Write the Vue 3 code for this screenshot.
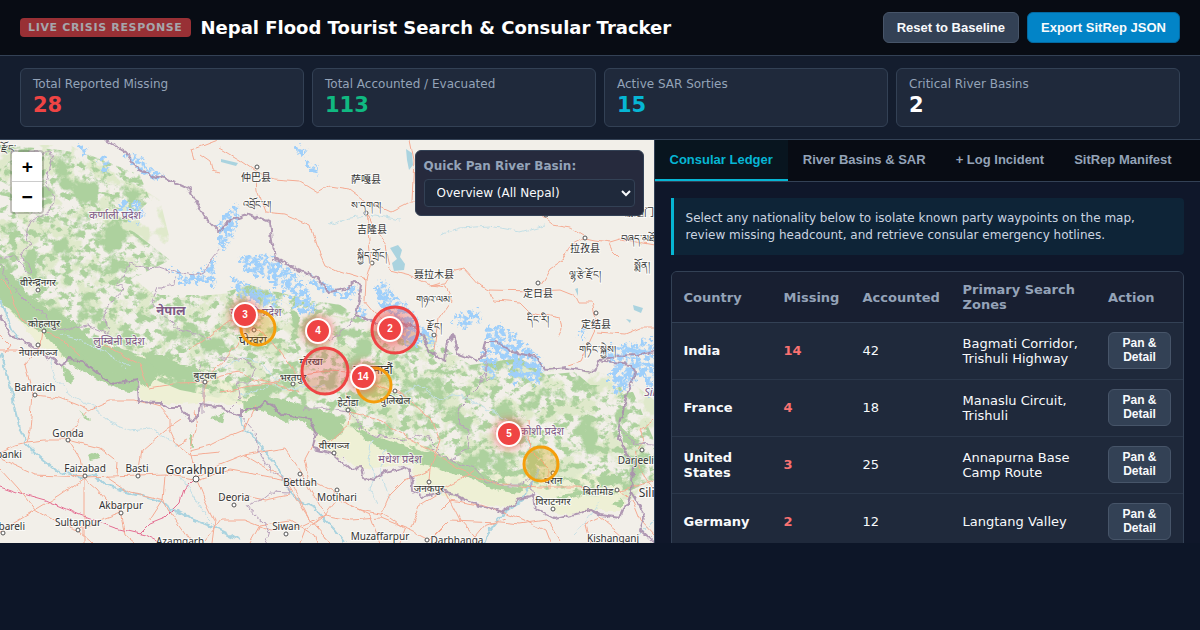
<script setup>
import { ref } from 'vue'

const basin = ref('Overview (All Nepal)')
const basins = ['Overview (All Nepal)', 'Gandaki Basin', 'Bagmati Basin', 'Koshi Basin']
const active = ref('Consular Ledger')
const tabs = ['Consular Ledger', 'River Basins & SAR', '+ Log Incident', 'SitRep Manifest']

const stats = [
  { label: 'Total Reported Missing', value: 28, tone: 'red' },
  { label: 'Total Accounted / Evacuated', value: 113, tone: 'green' },
  { label: 'Active SAR Sorties', value: 15, tone: 'cyan' },
  { label: 'Critical River Basins', value: 2, tone: 'white' }
]

const rows = [
  { country: 'India', missing: 14, accounted: 42, zones: 'Bagmati Corridor, Trishuli Highway' },
  { country: 'France', missing: 4, accounted: 18, zones: 'Manaslu Circuit, Trishuli' },
  { country: 'United States', missing: 3, accounted: 25, zones: 'Annapurna Base Camp Route' },
  { country: 'Germany', missing: 2, accounted: 12, zones: 'Langtang Valley' }
]

const zones = [
  { x: 395, y: 330, r: 23, c: '#ef4444' },
  { x: 325, y: 371, r: 23, c: '#ef4444' },
  { x: 258, y: 328, r: 17, c: '#f59e0b' },
  { x: 374, y: 385, r: 17, c: '#f59e0b' },
  { x: 541, y: 464, r: 17, c: '#f59e0b' }
]
const markers = [
  { x: 245, y: 315, n: 3 },
  { x: 318, y: 331, n: 4 },
  { x: 390, y: 329, n: 2 },
  { x: 363, y: 377, n: 14 },
  { x: 509, y: 434, n: 5 }
]

const frontier = [
  '105,140 125,152 131,160 140,170 153,176 165,178 177,184 190,190 197,204 203,215 212,225 220,233 226,224 232,220 250,214 270,222 272,240 275,258 297,270 316,277 330,292 347,288 355,281 362,285 359,300 356,315 375,323 400,322 420,330 430,352 445,361 448,340 453,334 458,354 478,361 483,356 486,342 497,342 513,352 535,357 545,370 567,368 594,372 598,361 630,365 635,374 625,400 618,438 634,465 631,492 620,518 600,515 590,510 575,514 555,519 535,509 533,496 518,500 503,512 470,502 455,494 440,491 423,497 412,490 411,470 402,467 383,473 375,479 364,477 362,467 350,468 333,453 313,448 316,432 310,419 283,415 276,408 265,401 257,409 241,409 241,416 220,407 200,405 197,418 190,420 180,408 170,408 160,403 139,402 137,380 112,384 82,360 68,359 62,366 25,342 10,335 0,315',
  '598,361 615,356 635,355 654,351',
  '631,492 637,502 645,515 640,530 654,543'
]
const provinces = [
  '12,152 50,152 52,160 45,185 54,195 50,212 30,222 25,235 30,242 20,255 33,272',
  '0,258 15,256 28,272 33,272',
  '0,262 8,282 20,295 30,305 45,315 50,326 65,330 88,326 108,334',
  '108,334 105,310 113,300 124,288 116,285 125,275 130,263 145,268 160,267 175,272 195,275 205,272 212,258 220,248',
  '175,275 174,285 158,288 152,302 163,315 180,330 200,335 212,340',
  '220,358 240,358 256,368 250,382 238,382 240,398 230,408',
  '330,340 350,325 356,315',
  '303,410 306,408 320,408 350,412 362,428 375,436 390,438 405,440 415,434 430,440 440,450',
  '485,371 480,385 460,405 458,425 470,432 468,448 450,460',
  '430,448 450,460 475,468 485,480 500,485 520,485 530,478 535,500',
  '485,362 486,380 490,378',
  '241,416 255,432 258,450 270,470 285,480 290,493 270,492 260,500 247,505 255,515 270,528 265,543',
  '620,430 635,443 654,444',
  '203,412 203,380 200,360'
]
const roads = [
  '220,148 240,160 262,175 275,180 300,182 318,193 330,186 350,189 366,201 390,212 410,202 440,202',
  '256,180 257,190 265,212 285,214 310,225 316,245 325,265 340,272 366,280',
  '366,212 372,225 386,245 390,270 410,275 430,285 440,282',
  '366,280 371,262 368,230 366,212',
  '366,280 365,300 375,312 395,330',
  '410,140 414,160 412,200',
  '430,285 446,287 452,300 438,320 434,350',
  '430,285 446,284 455,270 464,268 480,286 490,290 535,291 560,290 575,296 578,302 592,302 597,325 590,340 580,362 568,366',
  '490,290 494,300 520,302 530,312 560,318 562,330 558,338',
  '540,285 550,268 562,260 572,245 585,238 595,240 610,242 620,239 654,245',
  '540,215 552,225 570,228 583,236',
  '597,332 625,334 640,328 654,328',
  '608,242 612,250 620,258',
  '200,155 210,162 212,170 220,172',
  '195,160 192,150 210,143 218,140',
  '0,280 10,290 15,305 22,318 35,330 50,333 65,342 80,356',
  '42,332 40,345 36,352 25,365 33,395 30,430 27,442',
  '0,350 25,350 42,352',
  '35,395 60,398 78,405 88,410 110,400 135,400 160,407 170,418 170,430 177,445 188,440',
  '27,442 45,440 68,440 75,425 88,410',
  '0,452 15,445 27,442',
  '0,459 35,475 85,477 138,475 165,474 200,480 230,470 260,475 285,480 310,520 330,543',
  '68,440 80,460 84,478 84,543',
  '68,440 100,448 118,462 117,475',
  '84,478 60,495 35,510 10,525 0,533',
  '35,510 18,488 0,468',
  '35,510 55,522 78,530 92,543',
  '84,478 98,490 110,505 120,510 125,535 135,543',
  '78,530 100,520 121,512',
  '138,475 142,450 165,430 180,420',
  '105,475 130,492 165,500 172,515 190,540',
  '196,478 190,450 196,430 194,410',
  '196,478 205,500 215,520 212,543',
  '196,478 220,465 245,455 270,470 290,480 310,520',
  '165,474 163,500 150,520',
  '190,450 210,445 220,440 244,430 255,405',
  '177,445 190,455 220,452',
  '148,388 180,383 205,382 220,375 240,372 254,380 275,384 300,392',
  '205,383 205,408',
  '100,343 140,365 148,387',
  '315,441 305,460 310,480 330,490 350,505 370,515 380,543',
  '245,455 285,448 300,470 325,515 350,520 380,518 410,530 430,540',
  '337,500 325,515 305,530 300,543',
  '380,518 390,495 405,480 430,470',
  '410,530 420,505 445,490 460,520 480,543',
  '430,540 450,520 500,522 520,524 548,520 560,540',
  '220,500 240,495 265,500 290,495',
  '205,540 220,520 245,520 270,530 300,527 325,515',
  '345,390 350,410 348,425 330,440 318,450',
  '350,412 380,420 410,440 430,450 460,470 500,485 540,487 575,487 600,489 620,490 640,485 654,480',
  '220,392 250,386 272,384 295,375 325,371 350,372 365,380 385,388 400,395',
  '254,328 240,340 225,360 205,378',
  '254,328 275,345 290,365 295,375',
  '254,328 230,320 210,335 190,350',
  '395,390 415,405 432,420 440,440 430,470 428,490',
  '550,490 550,470 530,450 528,420',
  '620,490 632,500 640,520 654,535',
  '635,450 640,470 647,480 654,490',
  '654,420 640,430 645,440 638,448',
  '440,510 450,500 480,505 520,518 545,530 550,543',
  '470,543 485,525 505,518',
  '590,543 585,525 600,518 615,530 630,543',
  '0,335 10,345 5,352',
  '250,543 260,525 290,520 315,535 318,543',
  '400,543 405,530 385,515 360,510 337,500',
  '440,490 460,480 475,470'
]
const expressways = [
  '0,486 20,493 45,500 80,515 115,528 145,535 160,543',
  '140,534 150,524 165,518 180,503 184,490 190,483 196,477'
]
const rivers = [
  '0,353 5,370 10,385 15,410 20,430 27,445 40,457 55,470 80,477 95,475 105,485 130,493 155,500 175,510 190,518 215,528 240,540',
  '240,415 243,428 252,434 265,452 277,465 285,485 298,500 315,508 325,520 335,530 345,543',
  '0,300 5,310 12,330 20,340',
  '540,470 530,485 522,500 505,512 490,530 485,543'
]
const streams = [
  '50,358 55,380 75,398 95,408 110,422 130,430 150,428 170,440 182,448',
  '372,440 368,460 375,475 370,490 378,505',
  '390,500 380,470 386,450',
  '180,475 190,490 205,515 220,530',
  '60,335 80,340 105,352 130,368',
  '400,395 420,385 440,400 460,395 490,410 520,430 540,455',
  '440,235 460,228 490,226 520,232 545,225',
  '600,500 590,515 575,535',
  '655,520 640,535',
  '220,370 240,358 262,362 280,390 325,385',
  '330,225 350,218 375,215 400,220',
  '240,395 265,388 285,375'
]
const towns = [
  [38, 290], [44, 331], [38, 345], [35, 395], [68, 440], [85, 476], [138, 476], [121, 513], [78, 530], [3, 533], [205, 382], [254, 330],
  [257, 167], [366, 213], [372, 263], [293, 384], [348, 410], [334, 453], [300, 474], [337, 490], [234, 505], [286, 534], [395, 391],
  [538, 283], [585, 238], [596, 313], [434, 335], [429, 482], [553, 473], [553, 509], [617, 490], [642, 450], [427, 540], [546, 215]
]
const labels = [
  { t: 'कर्णाली प्रदेश', x: 115, y: 219, k: 'state' },
  { t: 'लुम्बिनी प्रदेश', x: 119, y: 345, k: 'state' },
  { t: 'नेपाल', x: 171, y: 315, k: 'state country' },
  { t: 'गण्डकी प्रदेश', x: 256, y: 316, k: 'state' },
  { t: 'मधेश प्रदेश', x: 400, y: 463, k: 'state' },
  { t: 'कोशी प्रदेश', x: 542, y: 435, k: 'state' },
  { t: 'Sikkim', x: 660, y: 396, k: 'state italic' },
  { t: 'वीरेन्द्रनगर', x: 38, y: 286 },
  { t: 'कोहलपुर', x: 44, y: 327 },
  { t: 'नेपालगञ्ज', x: 38, y: 356 },
  { t: 'बुटवल', x: 205, y: 379 },
  { t: 'पोखरा', x: 253, y: 345, k: 'mid' },
  { t: 'गोरखा', x: 311, y: 365 },
  { t: 'भरतपुर', x: 293, y: 381 },
  { t: 'हेटौंडा', x: 348, y: 406 },
  { t: 'काठमाडौं', x: 373, y: 374, k: 'mid' },
  { t: 'धुलिखेल', x: 395, y: 404 },
  { t: 'वीरगञ्ज', x: 334, y: 449 },
  { t: 'जनकपुर', x: 429, y: 492 },
  { t: 'धरान', x: 553, y: 484 },
  { t: 'बिर्तामोड', x: 598, y: 495 },
  { t: 'विराटनगर', x: 553, y: 505 },
  { t: 'Bahraich', x: 35, y: 391 },
  { t: 'Gonda', x: 68, y: 437 },
  { t: 'Faizabad', x: 85, y: 472 },
  { t: 'Basti', x: 137, y: 472 },
  { t: 'Gorakhpur', x: 196, y: 474, k: 'large' },
  { t: 'Akbarpur', x: 121, y: 509 },
  { t: 'Sultanpur', x: 78, y: 526 },
  { t: 'Barabanki', x: -2, y: 458 },
  { t: 'Raebareli', x: 3, y: 530 },
  { t: 'Azamgarh', x: 180, y: 545 },
  { t: 'Deoria', x: 234, y: 501 },
  { t: 'Bettiah', x: 300, y: 486 },
  { t: 'Motihari', x: 337, y: 501 },
  { t: 'Siwan', x: 286, y: 530 },
  { t: 'Muzaffarpur', x: 380, y: 540 },
  { t: 'Darbhanga', x: 457, y: 544 },
  { t: 'Kishanganj', x: 613, y: 542 },
  { t: 'Darjeeling', x: 642, y: 464 },
  { t: 'Siliguri', x: 658, y: 497, k: 'large' },
  { t: '仲巴县', x: 256, y: 181 },
  { t: '萨嘎县', x: 366, y: 183 },
  { t: '吉隆县', x: 372, y: 233 },
  { t: '聂拉木县', x: 434, y: 278 },
  { t: '定日县', x: 538, y: 297 },
  { t: '拉孜县', x: 585, y: 252 },
  { t: '定结县', x: 596, y: 328 },
  { t: '谢通门县', x: 644, y: 216 },
  { t: 'འབྲོང་པ།', x: 257, y: 208 },
  { t: 'ས་དགའ།', x: 366, y: 209 },
  { t: 'སྐྱིད་གྲོང།', x: 372, y: 259 },
  { t: 'གཉའ་ལམ་', x: 434, y: 303 },
  { t: 'རྫོང།', x: 434, y: 330 },
  { t: 'དིང་རི།', x: 538, y: 323 },
  { t: 'ལྷ་རྩེ་རྫོང།', x: 585, y: 278 },
  { t: 'གཏིང་སྐྱེས།', x: 597, y: 353 },
  { t: 'བཞད་མཐོང་', x: 642, y: 242 },
  { t: 'སྨོན།', x: 642, y: 269 },
  { t: 'རྫོང་', x: 8, y: 152 }
]
</script>

<template>
  <div class="app">
    <header class="top">
      <div class="brand">
        <span class="badge">LIVE CRISIS RESPONSE</span>
        <h1>Nepal Flood Tourist Search &amp; Consular Tracker</h1>
      </div>
      <div class="actions">
        <button class="btn" type="button">Reset to Baseline</button>
        <button class="btn primary" type="button">Export SitRep JSON</button>
      </div>
    </header>

    <section class="stats">
      <div v-for="s in stats" :key="s.label" class="stat">
        <div class="stat-label">{{ s.label }}</div>
        <div class="stat-value" :class="s.tone">{{ s.value }}</div>
      </div>
    </section>

    <main class="main">
      <section class="map">
        <svg class="canvas" viewBox="0 140 654 403" preserveAspectRatio="xMinYMin slice" aria-label="Map of Nepal">
          <defs>
            <filter id="rough" filterUnits="userSpaceOnUse" x="0" y="140" width="654" height="403">
              <feTurbulence type="fractalNoise" baseFrequency="0.12" numOctaves="3" seed="4" />
              <feDisplacementMap in="SourceGraphic" scale="7" xChannelSelector="R" yChannelSelector="G" />
            </filter>
            <filter id="wobble" filterUnits="userSpaceOnUse" x="0" y="140" width="654" height="403">
              <feTurbulence type="fractalNoise" baseFrequency="0.07" numOctaves="2" seed="8" />
              <feDisplacementMap in="SourceGraphic" scale="6" xChannelSelector="R" yChannelSelector="G" />
            </filter>
            <filter id="scrub" filterUnits="userSpaceOnUse" x="0" y="140" width="654" height="403" color-interpolation-filters="sRGB">
              <feTurbulence type="fractalNoise" baseFrequency="0.11 0.13" numOctaves="5" seed="11" />
              <feColorMatrix values="0 0 0 0 0  0 0 0 0 0  0 0 0 0 0  7 0 0 0 -3.5" result="n" />
              <feComposite in="SourceGraphic" in2="n" operator="in" />
            </filter>
            <filter id="grove" filterUnits="userSpaceOnUse" x="0" y="140" width="654" height="403" color-interpolation-filters="sRGB">
              <feTurbulence type="fractalNoise" baseFrequency="0.04" numOctaves="6" seed="31" />
              <feColorMatrix values="0 0 0 0 0  0 0 0 0 0  0 0 0 0 0  9 0 0 0 -5.1" result="n" />
              <feComposite in="SourceGraphic" in2="n" operator="in" />
            </filter>
            <filter id="mist" filterUnits="userSpaceOnUse" x="0" y="140" width="654" height="403" color-interpolation-filters="sRGB">
              <feTurbulence type="fractalNoise" baseFrequency="0.05" numOctaves="6" seed="23" />
              <feColorMatrix values="0 0 0 0 0  0 0 0 0 0  0 0 0 0 0  0 8 0 0 -3.8" result="n" />
              <feComposite in="SourceGraphic" in2="n" operator="in" />
            </filter>
            <filter id="ice" filterUnits="userSpaceOnUse" x="0" y="140" width="654" height="403" color-interpolation-filters="sRGB">
              <feTurbulence type="fractalNoise" baseFrequency="0.22" numOctaves="4" seed="5" result="t" />
              <feColorMatrix in="t" values="0 0 0 0 0  0 0 0 0 0  0 0 0 0 0  7 0 0 0 -2.7" result="n" />
              <feDisplacementMap in="SourceGraphic" in2="t" scale="16" xChannelSelector="R" yChannelSelector="G" result="d" />
              <feComposite in="d" in2="n" operator="in" />
            </filter>
            <filter id="glow" x="-100%" y="-100%" width="300%" height="300%">
              <feGaussianBlur stdDeviation="5" />
            </filter>
          </defs>

          <rect x="0" y="140" width="654" height="403" fill="#f2efe9" />

          <path class="farm" filter="url(#rough)" d="M0 300L40 345L100 375L137 378L141 400L180 405L205 402L240 405L310 417L318 446L364 470L412 464L418 492L470 500L505 508L535 492L560 515L600 510L622 510L628 480L560 470L480 470L400 435L300 410L200 370L100 345Z" />

          <path class="haze" filter="url(#mist)" d="M0 145L70 145L120 175L160 200L170 240L130 275L160 300L260 290L300 310L360 320L430 335L450 355L500 360L560 368L600 372L635 385L654 400V480L630 500L520 490L400 440L300 415L180 390L60 340L0 280Z" />
          <path class="wood" filter="url(#scrub)" d="M0 145L60 150L90 155L140 175L150 200L125 225L170 260L130 280L160 295L215 295L250 285L310 300L340 305L380 330L430 350L440 345L470 365L520 358L545 375L575 372L590 385L630 385L654 440V480L620 495L520 488L440 470L400 440L300 412L180 390L60 340L0 290Z" />
          <path class="wood" filter="url(#grove)" d="M0 145L60 150L90 155L140 175L150 200L125 225L170 260L130 280L160 295L215 295L250 285L310 300L340 305L380 330L430 350L440 345L470 365L520 358L545 375L575 372L590 385L630 385L654 440V480L620 495L520 488L440 470L400 440L300 412L180 390L60 340L0 290Z" />

          <path class="forest" filter="url(#rough)" d="M0 262L12 276L28 295L50 310L76 322L90 340L120 348L148 360L190 366L215 378L200 380L158 374L150 388L135 380L112 384L100 372L82 362L68 360L60 352L40 330L22 322L0 300Z" />
          <path class="forest" filter="url(#rough)" d="M58 348L80 352L102 372L135 374L138 392L120 390L95 378L70 364Z M140 352L165 356L190 372L212 378L190 382L160 374Z M62 365L74 377L72 384L64 378Z" />
          <path class="forest" filter="url(#rough)" d="M243 400L265 394L290 402L330 414L340 420L344 432L330 440L312 430L300 420L285 422L262 410L244 412Z M352 425L375 436L410 448L440 456L470 466L500 484L525 488L520 494L495 490L470 478L430 466L395 456L365 440Z" />
          <path class="forest" filter="url(#rough)" d="M620 425L636 440L640 446L622 442Z M598 478L620 474L624 482L600 486Z M610 505L622 500L622 508Z M555 496L590 490L592 494L560 500Z M88 456L98 452L100 458L90 460Z M80 412L90 420L88 422Z M212 418L224 412L222 424Z M188 440L192 432L192 448Z" />

          <g class="glacier" filter="url(#ice)">
            <path d="M125 152L140 156L150 168L166 176L158 179L142 172L130 162Z" />
            <path d="M120 202L140 203L146 214L135 222L122 212Z M78 143L88 148L86 156L80 150Z M100 157L110 160L108 176L103 170Z" />
            <path d="M168 268L190 276L208 268L216 256L216 286L200 282L185 284Z" />
            <path d="M297 146L308 150L306 158L296 152Z M306 162L318 166L318 176L310 170Z" />
            <path d="M222 215L238 205L240 222L225 250L218 245Z" />
            <path d="M240 258L265 255L280 262L296 274L310 292L318 312L300 316L290 295L272 282L245 272Z" />
            <path d="M230 276L250 285L275 295L282 304L265 305L240 296Z" />
            <path d="M300 276L330 285L345 294L355 285L360 290L350 300L320 290Z" />
            <path d="M375 285L385 280L395 295L412 310L425 330L420 345L405 345L395 320L380 305Z M358 305L368 312L362 320Z" />
            <path d="M405 318L430 330L436 345L420 340Z M452 317L480 310L482 322L462 328Z" />
            <path d="M485 330L500 324L515 335L535 350L545 368L540 385L525 378L515 385L508 362L492 352Z M482 350L498 358L495 380L484 372Z" />
            <path d="M578 330L586 330L584 344Z M600 350L625 345L654 340V370L640 378L620 395L608 380L615 365Z" />
            <path d="M640 360L654 360V400L645 380Z" />
          </g>
          <g class="lake">
            <path d="M390 248L398 245L402 250L400 257L405 264L404 270L394 271L392 263L397 259Z" />
            <path d="M406 149L412 153L413 165L409 170L407 160Z M221 159L238 163L236 166L221 162Z" />
            <path d="M633 305L643 308L641 313L634 310Z M575 289L578 288L578 296Z M626 319L631 320L630 323Z" />
          </g>

          <g filter="url(#rough)">
            <polyline v-for="(p, i) in streams" :key="'s' + i" class="stream" :points="p" />
            <polyline v-for="(p, i) in rivers" :key="'r' + i" class="river" :points="p" />
          </g>
          <g filter="url(#wobble)">
            <polyline v-for="(p, i) in roads" :key="'d' + i" class="road" :points="p" />
            <polyline v-for="(p, i) in expressways" :key="'e' + i" class="express" :points="p" />
          </g>
          <g filter="url(#rough)">
            <polyline v-for="(p, i) in provinces" :key="'p' + i" class="province" :points="p" />
            <polyline v-for="(p, i) in frontier" :key="'f' + i" class="frontier" :points="p" />
          </g>

          <circle v-for="(t, i) in towns" :key="'t' + i" class="town" :cx="t[0]" :cy="t[1]" r="2" />
          <circle class="town" cx="196" cy="479" r="3" />
          <text v-for="(l, i) in labels" :key="'l' + i" class="place" :class="l.k" :x="l.x" :y="l.y">{{ l.t }}</text>

          <circle v-for="(z, i) in zones" :key="'z' + i" :cx="z.x" :cy="z.y" :r="z.r" :fill="z.c" fill-opacity="0.25" :stroke="z.c" stroke-width="3" />
          <g v-for="m in markers" :key="m.n">
            <circle :cx="m.x" :cy="m.y" r="14" fill="#ef4444" fill-opacity="0.7" filter="url(#glow)" />
            <circle :cx="m.x" :cy="m.y" r="12" fill="#ef4444" stroke="#fff" stroke-width="2" />
            <text class="count" :x="m.x" :y="m.y + 3">{{ m.n }}</text>
          </g>
        </svg>

        <div class="zoom">
          <button type="button" aria-label="Zoom in">+</button>
          <button type="button" aria-label="Zoom out">−</button>
        </div>

        <div class="pan">
          <label for="basin">Quick Pan River Basin:</label>
          <select id="basin" v-model="basin">
            <option v-for="b in basins" :key="b">{{ b }}</option>
          </select>
        </div>
      </section>

      <section class="panel">
        <nav class="tabs">
          <button v-for="t in tabs" :key="t" type="button" :class="{ active: t === active }" @click="active = t">{{ t }}</button>
        </nav>
        <div class="body">
          <p class="note">Select any nationality below to isolate known party waypoints on the map, review missing headcount, and retrieve consular emergency hotlines.</p>
          <div class="ledger">
            <table>
              <thead>
                <tr>
                  <th class="c-country">Country</th>
                  <th class="c-missing">Missing</th>
                  <th class="c-accounted">Accounted</th>
                  <th>Primary Search Zones</th>
                  <th class="c-action">Action</th>
                </tr>
              </thead>
              <tbody>
                <tr v-for="r in rows" :key="r.country">
                  <td class="country">{{ r.country }}</td>
                  <td class="missing">{{ r.missing }}</td>
                  <td>{{ r.accounted }}</td>
                  <td>{{ r.zones }}</td>
                  <td><button class="btn small" type="button">Pan &amp; Detail</button></td>
                </tr>
              </tbody>
            </table>
          </div>
        </div>
      </section>
    </main>
  </div>
</template>

<style>
body {
  margin: 0;
  background: #0f172a;
}
</style>

<style scoped>
* {
  box-sizing: border-box;
}
.app {
  display: flex;
  flex-direction: column;
  height: 100vh;
  padding-bottom: 87px;
  background: #0d1628;
  color: #f8fafc;
  font-family: "DejaVu Sans", sans-serif;
  font-size: 13px;
}
.top {
  display: flex;
  align-items: center;
  justify-content: space-between;
  padding: 12px 20px;
  background: #080c14;
  border-bottom: 1px solid #334155;
}
.brand {
  display: flex;
  align-items: center;
  gap: 10px;
}
.badge {
  padding: 3px 8px;
  border-radius: 4px;
  background: #983035;
  color: #a5a6ab;
  font-size: 11px;
  line-height: 13px;
  font-weight: 700;
  letter-spacing: 0.06em;
}
h1 {
  margin: 0;
  font-size: 18px;
  line-height: 21px;
  font-weight: 700;
  color: #fff;
}
.actions {
  display: flex;
  gap: 8px;
}
.btn {
  padding: 7px 13px;
  border: 1px solid #475569;
  border-radius: 6px;
  background: #334155;
  color: #f8fafc;
  font: 700 13px/15px "Liberation Sans", sans-serif;
}
.btn.primary {
  background: #0284c7;
  border-color: #0369a1;
}
.btn.small {
  width: 100%;
  padding: 3px 12px 4px;
  font-size: 12px;
  line-height: 14px;
}
.stats {
  display: grid;
  grid-template-columns: repeat(4, 1fr);
  gap: 8px;
  padding: 12px 20px;
  background: #141d2e;
  border-bottom: 1px solid #334155;
}
.stat {
  padding: 8px 12px;
  background: #1f293b;
  border: 1px solid #334155;
  border-radius: 6px;
}
.stat-label {
  color: #94a3b8;
  font-size: 12px;
  line-height: 14px;
}
.stat-value {
  margin-top: 2px;
  font-size: 21px;
  line-height: 25px;
  font-weight: 700;
}
.red { color: #ef4444; }
.green { color: #10b981; }
.cyan { color: #06b6d4; }
.white { color: #fff; }

.main {
  flex: 1;
  min-height: 0;
  display: grid;
  grid-template-columns: 6fr 5fr;
  grid-template-rows: minmax(0, 1fr);
}
.map {
  position: relative;
  overflow: hidden;
  border-right: 1px solid #334155;
  background: #f2efe9;
}
.canvas {
  display: block;
  width: 100%;
  height: 100%;
}
.farm { fill: #eef0d5; }
.haze { fill: #dfe9cb; }
.wood { fill: #add19e; }
.forest { fill: #add19e; }
.glacier { fill: #9fcffa; }
.lake { fill: #aad3df; }
.stream, .river, .road, .express, .province, .frontier {
  fill: none;
  stroke-linejoin: round;
}
.stream { stroke: #c3dfe6; stroke-width: 1; }
.river { stroke: #aad3df; stroke-width: 2; }
.road { stroke: #f5ab93; stroke-width: 1; }
.express { stroke: #e46e92; stroke-width: 1; }
.province { stroke: #b9a3bc; stroke-width: 1; }
.frontier { stroke: #a98fad; stroke-width: 2; stroke-opacity: 0.9; }
.town {
  fill: #fff;
  stroke: #555;
  stroke-width: 1;
}
.place {
  font-family: "Noto Sans", "Noto Sans CJK SC", sans-serif;
  font-size: 10px;
  text-anchor: middle;
  fill: #333;
  stroke: #fff;
  stroke-opacity: 0.7;
  stroke-width: 2px;
  paint-order: stroke;
}
.place.mid { font-size: 12px; }
.place.large { font-size: 12px; }
.place.state { fill: #7f5a85; font-size: 11px; }
.place.country { font-size: 13px; }
.place.italic { font-style: italic; }
.count {
  fill: #fff;
  font: 700 10px "Liberation Sans", sans-serif;
  text-anchor: middle;
}
.zoom {
  position: absolute;
  top: 10px;
  left: 10px;
  border: 2px solid rgba(0, 0, 0, 0.2);
  border-radius: 4px;
  background-clip: padding-box;
}
.zoom button {
  display: block;
  width: 30px;
  height: 30px;
  padding: 0;
  border: 0;
  background: #fff;
  color: #000;
  font: 700 18px/30px "DejaVu Sans Mono", monospace;
  text-indent: 1px;
}
.zoom button:first-child {
  border-bottom: 1px solid #ccc;
  border-radius: 2px 2px 0 0;
}
.zoom button:last-child {
  border-radius: 0 0 2px 2px;
}
.pan {
  position: absolute;
  top: 10px;
  right: 10px;
  width: 229px;
  padding: 8px;
  border: 1px solid #334155;
  border-radius: 6px;
  background: #262a3d;
}
.pan label {
  display: block;
  margin-bottom: 6px;
  color: #94a3b8;
  font-size: 12px;
  line-height: 14px;
  font-weight: 700;
}
.pan select {
  display: block;
  width: 100%;
  height: 28px;
  padding: 0 8px;
  border: 1px solid #334155;
  border-radius: 4px;
  background: #1f293b;
  color: #f8fafc;
  font: 12px "DejaVu Sans", sans-serif;
}
.panel {
  display: flex;
  flex-direction: column;
  min-width: 0;
  overflow: hidden;
  background: #0f172a;
}
.tabs {
  display: flex;
  background: #080c14;
  border-bottom: 1px solid #334155;
}
.tabs button {
  padding: 12px 15px;
  border: 0;
  border-bottom: 2px solid transparent;
  background: none;
  color: #94a3b8;
  font: 700 13px/15px "Liberation Sans", sans-serif;
  white-space: nowrap;
}
.tabs button.active {
  background: #08151f;
  border-bottom-color: #06b6d4;
  color: #06b6d4;
}
.body {
  flex: 1;
  min-height: 0;
  padding: 16px;
  overflow: hidden;
}
.note {
  margin: 0 0 16px;
  padding: 12px 12px 11px;
  border-left: 3px solid #06b6d4;
  border-radius: 0 4px 4px 0;
  background: #0e2437;
  color: #cbd5e1;
  font-size: 12px;
  line-height: 17px;
}
.ledger {
  overflow: hidden;
  border: 1px solid #334155;
  border-radius: 6px;
  background: #1f293b;
}
table {
  width: 100%;
  table-layout: fixed;
  border-collapse: separate;
  border-spacing: 0;
  line-height: 15px;
}
th, td {
  padding: 10px 12px;
  text-align: left;
  vertical-align: middle;
}
th {
  background: #181f31;
  border-bottom: 1px solid #334155;
  color: #94a3b8;
  font-weight: 700;
}
td {
  padding-top: 9px;
  border-bottom: 1px solid #2b374a;
}
.c-country, .c-accounted { width: 100px; }
.c-missing { width: 79px; }
.c-action { width: 87px; }
.country { font-weight: 700; }
.missing { color: #f87171; font-weight: 700; }
</style>
